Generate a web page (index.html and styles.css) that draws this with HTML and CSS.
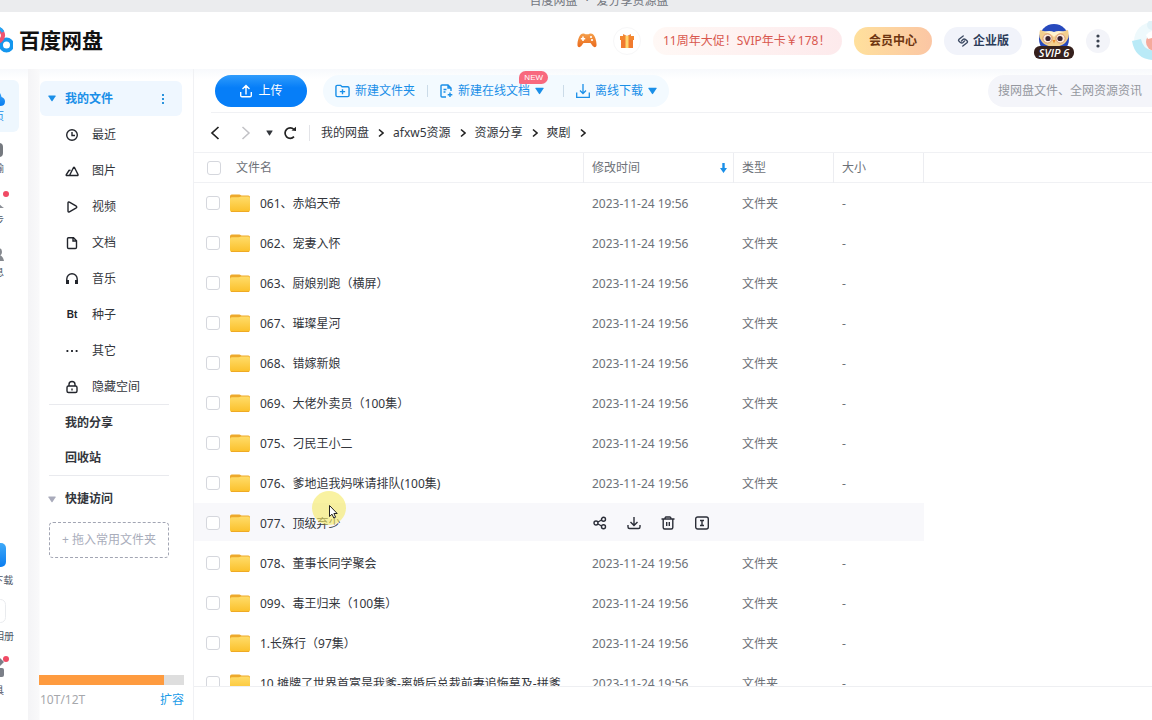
FILE: index.html
```html
<!DOCTYPE html>
<html lang="zh-CN">
<head>
<meta charset="utf-8">
<title>百度网盘</title>
<link rel="stylesheet" href="styles.css">
</head>
<body>
<svg class="defs" aria-hidden="true">
  <defs>
    <linearGradient id="gFolder" x1="0" y1="0" x2="0" y2="1"><stop offset="0" stop-color="#ffdc69"/><stop offset="1" stop-color="#fbc02a"/></linearGradient>
    <linearGradient id="gOrange" x1="0" y1="0" x2="0" y2="1"><stop offset="0" stop-color="#f5a04c"/><stop offset="1" stop-color="#ea6a1c"/></linearGradient>
    <linearGradient id="gBlue" x1="0" y1="0" x2="0" y2="1"><stop offset="0" stop-color="#3fa9f8"/><stop offset="1" stop-color="#0a7df0"/></linearGradient>
  </defs>
  <symbol id="folder" viewBox="0 0 20 19">
    <path d="M0 2.2Q0 .5 1.700.5H9.500L11.500 1.400H18.300Q20 1.400 20 3V9H0Z" fill="#eda92b"/>
    <path d="M0 5Q0 3.200 1.800 3.200H8.500Q10 3.200 11 2.600H18.200Q20 2.600 20 4.400V16Q20 18 18 18H2Q0 18 0 16Z" fill="url(#gFolder)"/>
    <path d="M1 17.500H19" stroke="#efaa24" stroke-width="1"/>
  </symbol>
  <symbol id="chev" viewBox="0 0 6 10"><path d="M1 1.500L5 5L1 8.500" fill="none" stroke="#222" stroke-width="1.600"/></symbol>
  <symbol id="caret" viewBox="0 0 8 7"><path d="M.8.5H7.200Q8 .5 7.600 1.300L4.500 6Q4 6.600 3.500 6L.4 1.300Q0 .5 .8.5Z" fill="currentColor"/></symbol>
</svg>
<div class="app">
  <div class="titlebar"><span>百度网盘</span><span>·</span><span>爱分享资源盘</span></div>

  <header class="header">
    <a class="brand" href="#">
      <svg class="brand-mark" width="34" height="30" viewBox="0 0 34 30" fill="none" stroke-width="4">
        <circle cx="7" cy="20" r="5.500" stroke="#1496ee"/>
        <circle cx="27.500" cy="20" r="5.500" stroke="#1496ee"/>
        <path d="M11 16A7.500 7.500 0 1 1 23.500 8" stroke="#26a6f5"/>
        <path d="M21 4.500Q26.500 10 22 15Q18 19 13 16.500" stroke="#ef5470"/>
        <path d="M17 2.500Q22 3 24 7" stroke="#26a6f5" stroke-width="3"/>
      </svg>
      <span>百度网盘</span>
    </a>
    <nav class="header-tools">
      <button class="plain" aria-label="游戏"><svg width="20" height="15" viewBox="0 0 20 15"><path d="M5 .8Q7-.2 8.500 1.300H11.500Q13-.2 15 .8C18 2 19.800 8.500 19.500 12.500C19 15 16.500 14.500 15 12L13.500 10H6.500L5 12C3.500 14.500 1 15 .5 12.500C.2 8.500 2 2 5 .8Z" fill="url(#gOrange)"/><path d="M6 3.500V8M3.800 5.700H8.200" stroke="#fff" stroke-width="1.600"/><circle cx="14" cy="4" r="1.100" fill="#fff"/><circle cx="15" cy="7" r="1.100" fill="#fff"/></svg></button>
      <button class="gift" aria-label="礼物"><svg width="14" height="14" viewBox="0 0 14 14"><path d="M3 0L7 2L11 0V3H3Z" fill="#ef8a3c"/><path d="M0 2H14V6H0Z" fill="#f3862f"/><path d="M1 6H13V14H1Z" fill="#f07a2e"/><path d="M5.500 2H8.500V14H5.500Z" fill="#ffd66e"/></svg></button>
      <a class="promo" href="#">11周年大促！SVIP年卡￥178！</a>
      <a class="pill vip" href="#">会员中心</a>
      <a class="pill corp" href="#"><svg width="12" height="12" viewBox="0 0 12 12" fill="none" stroke="#3c4a63" stroke-width="1.400" stroke-linecap="round" stroke-linejoin="round"><path d="M6.200 1L2 4.200Q1 5.200 2 6.200Q4.500 8.800 6 7.500L7.500 6M5.800 11L10 7.800Q11 6.800 10 5.800Q7.500 3.200 6 4.500L4.500 6"/></svg>企业版</a>
      <a class="owl" href="#" aria-label="SVIP6">
        <svg width="40" height="36" viewBox="0 0 40 36"><circle cx="20" cy="16" r="15" fill="#2749bd"/><path d="M6 7L13 9Q20 12 27 9L34 7Q36 14 32 19Q28 24 20 23Q12 24 8 19Q4 14 6 7Z" fill="#f3cf8d"/><path d="M9 9Q17 10 20 14Q23 10 31 9Q24 7 20 9Q16 7 9 9Z" fill="#fff3cf"/><circle cx="13.500" cy="15.500" r="4.600" fill="#fbe9dc" stroke="#d99a72"/><circle cx="26.500" cy="15.500" r="4.600" fill="#fbe9dc" stroke="#d99a72"/><circle cx="14" cy="15.500" r="2.600" fill="#3b2330"/><circle cx="26" cy="15.500" r="2.600" fill="#3b2330"/><path d="M18.500 17L20 20.500L21.500 17Z" fill="#e98b2d"/></svg>
        <span class="level">SVIP 6</span>
      </a>
      <button class="more" aria-label="更多"><svg width="4" height="14" viewBox="0 0 4 14" fill="#39414f"><circle cx="2" cy="2" r="1.600"/><circle cx="2" cy="7" r="1.600"/><circle cx="2" cy="12" r="1.600"/></svg></button>
      <a class="avatar" href="#" aria-label="账户"><svg width="44" height="40" viewBox="0 0 44 40"><circle cx="22" cy="20" r="19" fill="#eef9fc"/><path d="M1 20Q4 38 22 39L26 30Q12 30 10 18Z" fill="#b9eaf7"/><circle cx="24" cy="21" r="9" fill="#f5aa9b"/><path d="M15 14Q20 8 28 10L26 16L17 18Z" fill="#fff"/><circle cx="21" cy="4" r="5" fill="#e1f2f8"/></svg></a>
    </nav>
  </header>

  <div class="body">
    <nav class="rail">
      <div class="rail-list">
        <a class="rail-item on" href="#"><svg width="22" height="18" viewBox="0 0 22 18"><path d="M5 17Q0 17 0 12.500Q0 9 3.500 8Q5 1 11 1Q17 1 18.500 8Q22 9 22 12.500Q22 17 17 17Z" fill="url(#gBlue)"/></svg>首页</a>
        <a class="rail-item" href="#"><svg width="18" height="18" viewBox="0 0 18 18"><rect y="2" width="18" height="14" rx="4" fill="#75797f"/></svg>传输</a>
        <a class="rail-item" href="#"><svg width="20" height="18" viewBox="0 0 20 18"><path d="M0 15Q2 10 7 10Q8 3 12 6Q15 12 20 15Z" fill="#8b8f96"/></svg>同步<i class="dot"></i></a>
        <a class="rail-item" href="#"><svg width="20" height="18" viewBox="0 0 20 18"><circle cx="14" cy="7" r="4" fill="#85898f"/><path d="M2 16Q3 10 10 10H15Q19 11 20 16Z" fill="#85898f"/></svg>消息</a>
      </div>
      <div class="rail-list">
        <a class="rail-item" href="#"><svg width="24" height="24" viewBox="0 0 24 24"><rect width="24" height="24" rx="5" fill="url(#gBlue)"/></svg>APP下载</a>
        <a class="rail-item" href="#"><svg width="24" height="24" viewBox="0 0 24 24"><rect x=".5" y=".5" width="23" height="23" rx="5" fill="#fff" stroke="#e9ebee"/></svg>一刻相册</a>
        <a class="rail-item" href="#"><svg width="20" height="20" viewBox="0 0 20 20" fill="#7b7f88"><path d="M15 0L20 5L15 10L10 5Z"/><rect x="11" y="11" width="9" height="9" rx="2"/><rect width="9" height="9" rx="2"/><rect y="11" width="9" height="9" rx="2"/></svg>工具<i class="dot"></i></a>
      </div>
    </nav>

    <aside class="side">
      <a class="side-head" href="#"><svg class="caret" width="8" height="7"><use href="#caret"/></svg><b>我的文件</b><svg width="4" height="12" viewBox="0 0 4 12" fill="#2a93dd"><rect x="1" y="1" width="2" height="2"/><rect x="1" y="5" width="2" height="2"/><rect x="1" y="9" width="2" height="2"/></svg></a>
      <div class="group">
        <a class="item" href="#"><svg viewBox="0 0 14 14"><circle cx="7" cy="7" r="5.300"/><path d="M7 4V7.500H10"/></svg>最近</a>
        <a class="item" href="#"><svg viewBox="0 0 14 14"><path d="M4.500 11.500L8.500 3.500Q9 2.700 9.500 3.500L13 10.500Q13.300 11.500 12.300 11.500H2Q.8 11.500 1.300 10.500L4 6.500L5.500 6.200"/></svg>图片</a>
        <a class="item" href="#"><svg viewBox="0 0 14 14"><path d="M3 3Q3 1.500 4.400 2.200L11.300 6.200Q12.300 7 11.300 7.800L4.400 11.800Q3 12.500 3 11Z"/></svg>视频</a>
        <a class="item" href="#"><svg viewBox="0 0 14 14"><path d="M3.500 1.700H8.500L11.500 4.700V11.300Q11.500 12.500 10.300 12.500H3.700Q2.500 12.500 2.500 11.300V2.700Q2.500 1.700 3.500 1.700ZM8 1.700V5H11.500"/></svg>文档</a>
        <a class="item" href="#"><svg viewBox="0 0 14 14"><path d="M1.800 9V7A5.200 5.200 0 0 1 12.200 7V9"/><path d="M2.500 8V12M11.500 8V12" stroke-width="3"/></svg>音乐</a>
        <a class="item" href="#"><span class="bt">Bt</span>种子</a>
        <a class="item" href="#"><svg viewBox="0 0 14 14"><path d="M1.500 7H3.300M6.100 7H7.900M10.700 7H12.500" stroke-width="1.800"/></svg>其它</a>
        <a class="item" href="#"><svg viewBox="0 0 14 14"><rect x="2" y="6" width="10" height="6.500" rx="1.500"/><path d="M4 6V4.500A3 3 0 0 1 10 4.500V6M7 8.500V10.500"/></svg>隐藏空间</a>
      </div>
      <div class="group">
        <a class="item strong" href="#">我的分享</a>
        <a class="item strong" href="#">回收站</a>
      </div>
      <a class="side-head quick" href="#"><svg class="caret" width="8" height="7"><use href="#caret"/></svg><b>快捷访问</b></a>
      <button class="drop">+ 拖入常用文件夹</button>
      <div class="quota">
        <div class="bar"><div class="fill" style="width:86%"></div></div>
        <div class="quota-line"><span>10T/12T</span><a href="#">扩容</a></div>
      </div>
    </aside>

    <main class="main">
      <div class="toolbar">
        <button class="upload"><svg width="14" height="14" viewBox="0 0 14 14" fill="none" stroke="#fff" stroke-width="1.400"><path d="M7 10.500V1.500M3.500 5L7 1.500L10.500 5M1.700 8V11.500Q1.700 12.800 3 12.800H11Q12.300 12.800 12.300 11.500V8"/></svg>上传</button>
        <div class="actions">
          <button class="act"><svg width="15" height="14" viewBox="0 0 16 14" fill="none" stroke="#1a8fe8" stroke-width="1.500"><path d="M1 2.300Q1 1 2.300 1H6L7.500 2.500H13.500Q15 2.500 15 4V11.500Q15 13 13.500 13H2.500Q1 13 1 11.500ZM8 5V10.500M5.200 7.700H10.800"/></svg>新建文件夹</button>
          <button class="act"><svg width="13" height="14" viewBox="0 0 13 14" fill="none" stroke="#1a8fe8" stroke-width="1.400"><path d="M11 7V4L8 1H2Q1 1 1 2V12Q1 13 2 13H6M8 1V4H11M3.500 5.500H6.500M3.500 8H5.500M10 8.500V13M7.700 10.700H12.300"/></svg>新建在线文档<svg class="caret" width="9" height="8"><use href="#caret"/></svg><span class="new">NEW</span></button>
          <button class="act"><svg width="14" height="14" viewBox="0 0 14 14" fill="none" stroke="#1a8fe8" stroke-width="1.300"><path d="M7 0V9.500M4 6.500L7 9.500L10 6.500M.7 8.500V13.300H13.300V8.500"/></svg>离线下载<svg class="caret" width="9" height="8"><use href="#caret"/></svg></button>
        </div>
        <input class="search" type="search" aria-label="搜索" placeholder="搜网盘文件、全网资源资讯">
      </div>

      <div class="nav">
        <button class="plain" aria-label="后退"><svg width="10" height="14" viewBox="0 0 10 14" fill="none" stroke="#222" stroke-width="1.700"><path d="M8.500 1L2 7L8.500 13"/></svg></button>
        <button class="plain" aria-label="前进"><svg width="10" height="14" viewBox="0 0 10 14" fill="none" stroke="#c2c2c6" stroke-width="1.500"><path d="M1.500 1L8 7L1.500 13"/></svg></button>
        <button class="plain small" aria-label="历史"><svg width="7" height="6"><use href="#caret"/></svg></button>
        <button class="plain" aria-label="刷新"><svg width="14" height="14" viewBox="0 0 14 14" fill="none" stroke="#222" stroke-width="1.700"><path d="M11 10.700A5.200 5.200 0 1 1 11 3.500"/><path d="M8.500 4.500L13 5V.8Z" fill="#222" stroke="none"/></svg></button>
        <div class="crumbs">
          <a href="#">我的网盘</a><svg width="6" height="10"><use href="#chev"/></svg>
          <a href="#">afxw5资源</a><svg width="6" height="10"><use href="#chev"/></svg>
          <a href="#">资源分享</a><svg width="6" height="10"><use href="#chev"/></svg>
          <a href="#">爽剧</a><svg width="6" height="10"><use href="#chev"/></svg>
        </div>
      </div>

      <div class="list">
        <table>
          <colgroup><col><col class="c-time"><col class="c-type"><col class="c-size"></colgroup>
          <thead><tr>
            <th><div class="cell head"><input type="checkbox" aria-label="全选">文件名</div></th>
            <th><div class="cell between">修改时间<svg width="7" height="10" viewBox="0 0 7 10" fill="#1a8fe8"><path d="M2.300 0H4.700V5H7L3.500 10L0 5H2.300Z"/></svg></div></th>
            <th>类型</th><th>大小</th>
          </tr></thead>
          <tbody id="rows"></tbody>
        </table>
      </div>
      <div class="foot"></div>
    </main>
  </div>

  <svg class="pointer" width="34" height="34" viewBox="0 0 34 34"><circle cx="17" cy="17" r="17" fill="#f5ea62" fill-opacity=".6"/><path d="M17.500 14.500V25.500L20 23.200L21.800 27L23.600 26.200L21.900 22.500H25.200Z" fill="#fff" stroke="#222"/></svg>
</div>
<script src="app.js"></script>
</body>
</html>
```
FILE: styles.css
```css
* { box-sizing: border-box; }
body {
  margin: 0;
  font: 12px/16px "Noto Sans", "Noto Sans CJK SC", sans-serif;
  color: #33363c;
  background: #fff;
}
a { color: inherit; text-decoration: none; }
button { font: inherit; color: inherit; background: none; border: 0; padding: 0; cursor: pointer; }
svg { flex: none; display: block; }
.defs { position: absolute; width: 0; height: 0; }

.app { position: relative; display: flex; flex-direction: column; height: 100vh; overflow: hidden; }
.titlebar {
  flex: none; display: flex; justify-content: center; align-items: flex-end; gap: 8px;
  height: 12px; padding: 0 0 3px 46px; overflow: hidden;
  background: #ebecee; color: #73777f;
}

.header { flex: none; display: flex; justify-content: space-between; align-items: center; height: 57px; overflow: hidden; }
.brand { display: flex; align-items: center; gap: 6px; margin-left: -21px; padding-bottom: 2px; font-size: 21px; line-height: 28px; font-weight: 700; color: #111; }
.header-tools { display: flex; align-items: center; gap: 12px; }
.plain { display: flex; align-items: center; justify-content: center; min-width: 14px; height: 20px; }
.gift { display: flex; align-items: center; justify-content: center; width: 28px; height: 28px; margin-left: 4px; border: 1px solid #f7f7f8; border-radius: 14px; }
.promo { min-width: 189px; padding: 6px 4px 6px 10px; border-radius: 14px; color: #d9584f; background: linear-gradient(90deg, #fff8f5, #fdeaec); white-space: nowrap; }
.pill { display: flex; align-items: center; justify-content: center; gap: 4px; width: 78px; height: 28px; border-radius: 14px; font-weight: 700; }
.vip { color: #6e3510; background: linear-gradient(90deg, #ffe09c, #fbc6a4); }
.corp { color: #2d3d5a; background: #f1f3fa; }
.owl { position: relative; width: 40px; height: 36px; }
.level { position: absolute; left: 0; right: 0; bottom: 0; border-radius: 6px; background: #35201d; color: #fff; font: italic 600 11px/13px "Open Sans", sans-serif; text-align: center; }
.more { display: flex; align-items: center; justify-content: center; width: 24px; height: 24px; border-radius: 12px; background: #f3f4f9; }
.avatar { margin: 0 -23px 0 9px; }

.body { flex: 1; display: flex; min-height: 0; background: linear-gradient(#f7f9fc, #fff 10px); }
.rail { flex: none; display: flex; flex-direction: column; justify-content: space-between; width: 28px; padding: 11px 0 15px; overflow: hidden; }
.rail-list { display: flex; flex-direction: column; }
.rail-item { position: relative; display: flex; flex-direction: column; align-items: center; justify-content: center; gap: 2px; width: 50px; height: 52px; margin-left: -31px; border-radius: 6px; font-size: 10px; line-height: 14px; color: #50596a; white-space: nowrap; }
.rail-item.on { background: #eef7fe; color: #1a8fe8; }
.rail-list:last-child .rail-item { height: 56px; gap: 6px; }
.dot { position: absolute; right: 10px; top: 7px; width: 6px; height: 6px; border-radius: 3px; background: #f04a64; }

.side { flex: none; display: flex; flex-direction: column; width: 166px; padding: 12px 11px 12px 12px; border-right: 1px solid #f0f1f4; background: linear-gradient(90deg, #f4f4f6, #f9f9fa 11px, transparent 12px); }
.side-head { display: flex; align-items: center; gap: 9px; height: 35px; padding: 0 17px 0 8px; border-radius: 6px; background: #eff7ff; color: #1a8fe8; }
.side-head b { flex: 1; }
.side-head.quick { height: 46px; background: none; color: #33363c; }
.quick .caret { color: #a9abbb; }
.group { display: flex; flex-direction: column; margin: 0 13px 0 9px; border-bottom: 1px solid #e9eaee; }
.item { display: flex; align-items: center; gap: 13px; height: 36px; padding: 1px 0 0 16px; }
.item svg, .bt { width: 14px; height: 14px; }
.item svg { fill: none; stroke: #22252c; stroke-width: 1.4px; }
.bt { font: 700 10px/14px "Liberation Sans", sans-serif; text-align: center; color: #22252c; }
.item.strong { height: 35px; font-weight: 700; }
.drop { height: 36px; margin: 0 13px 0 9px; border: 1px dashed #a2a5b3; border-radius: 4px; color: #a9adbb; white-space: nowrap; }
.quota { margin: auto -2px 0 -1px; }
.bar { height: 10px; background: #dedede; }
.fill { height: 10px; background: #fe9b3f; }
.quota-line { display: flex; justify-content: space-between; padding: 7px 0 0 1px; color: #a6a8ac; }
.quota-line a { color: #1a9be8; }

.main { flex: 1; display: flex; flex-direction: column; min-width: 0; overflow: hidden; }
.toolbar { flex: none; display: flex; align-items: center; height: 44px; margin-left: 17px; padding-left: 4px; border-bottom: 1px solid #f0f1f4; }
.upload { display: flex; align-items: center; justify-content: center; gap: 5px; width: 92px; height: 32px; border-radius: 16px; color: #fff; background: linear-gradient(#2f9cfc, #067ef8 40%); }
.actions { display: flex; align-items: center; height: 32px; margin-left: 16px; padding: 0 12px; border-radius: 16px; background: #f3faff; color: #1a8fe8; }
.act { position: relative; display: flex; align-items: center; gap: 5px; white-space: nowrap; }
.act + .act { margin-left: 12px; padding-left: 13px; background: linear-gradient(#cbdbe8, #cbdbe8) left center / 1px 12px no-repeat; }
.act:last-child { margin-left: 19px; }
.new { position: absolute; right: -4px; top: -12px; padding: 0 5px; border-radius: 7px 7px 7px 2px; background: #f8697e; color: #fff; font: 8px/13px "Liberation Sans", sans-serif; }
.search { width: 190px; height: 32px; margin: 0 -26px 0 auto; padding: 0 10px; border: 0; border-radius: 16px; background: #f4f5fa; font: inherit; }
.search::placeholder { color: #95989f; }

.nav { flex: none; display: flex; align-items: center; gap: 12px; height: 39px; padding-left: 14px; }
.nav .plain + .plain { margin-left: 5px; }
.nav .plain + .small { margin: 0 -10px 0 -3px; }
.crumbs { display: flex; align-items: center; gap: 9px; padding-left: 12px; background: linear-gradient(#e3e4e8, #e3e4e8) left center / 1px 18px no-repeat; }

.list { flex: 1; min-height: 0; overflow: hidden; border-top: 1px solid #f0f1f4; background: linear-gradient(#f0f1f4, #f0f1f4) 0 29px / 100% 1px no-repeat; }
table { width: 730px; border-collapse: separate; border-spacing: 0; table-layout: fixed; }
.c-time { width: 150px; }
.c-type { width: 100px; }
.c-size { width: 90px; }
th, td { padding: 0 0 0 8px; text-align: left; font-weight: 400; white-space: nowrap; color: #6d7178; }
th { height: 30px; border-right: 1px solid #ecedf1; }
td { height: 40px; }
td:first-child, th:first-child { padding-left: 12px; }
.cell { display: flex; align-items: center; gap: 10px; color: #33363c; }
td > span, .cell span { display: block; padding-top: 2px; }
.head { gap: 15px; padding-left: 1px; color: #6d7178; }
.between { justify-content: space-between; padding-right: 6px; color: #6d7178; }
input[type="checkbox"] { appearance: none; flex: none; width: 14px; height: 14px; margin: 0; border: 1px solid #d5d7dd; border-radius: 3px; background: #fff; }
.hover td { background: linear-gradient(#f8f8fb, #f8f8fb) 0 0 / 100% 38px no-repeat; }
.ops { display: flex; gap: 20px; padding-left: 1px; }
.ops svg { fill: none; stroke: #2b2e38; stroke-width: 1.4px; }
.foot { flex: none; height: 34px; border-top: 1px solid #eeeff2; }
.pointer { position: absolute; left: 312px; top: 491px; pointer-events: none; }
```
FILE: app.js
```js
const names = [
  "061、赤焰天帝", "062、宠妻入怀", "063、厨娘别跑（横屏）", "067、璀璨星河",
  "068、错嫁新娘", "069、大佬外卖员（100集）", "075、刁民王小二",
  "076、爹地追我妈咪请排队(100集)", "077、顶级弃少", "078、董事长同学聚会",
  "099、毒王归来（100集）", "1.长殊行（97集）",
  "10.摊牌了世界首富是我爹-离婚后总裁前妻追悔莫及-拼爹"
];
const hovered = 8;
const ops = [
  ["分享", '<circle cx="3" cy="7" r="2"/><circle cx="10.500" cy="3.300" r="2"/><circle cx="10.500" cy="10.700" r="2"/><path d="M5 6L8.500 4M5 8L8.500 10"/>'],
  ["下载", '<path d="M7 1V9.500M3.500 6L7 9.500L10.500 6M1 9V11Q1 12.500 2.500 12.500H11.500Q13 12.500 13 11V9"/>'],
  ["删除", '<path d="M.5 3H13.500M4 3Q4 1 5 1H9Q10 1 10 3M2.200 3V11.500Q2.200 13 3.700 13H10.300Q11.800 13 11.800 11.500V3M5.700 6V10M8.300 6V10"/>'],
  ["重命名", '<rect x=".7" y="1" width="12.600" height="12" rx="2"/><path d="M5 4.500H9M5 9.500H9M7 4.500V9.500"/>']
];
const opsCell = '<td colspan="3"><div class="ops">' + ops.map(([label, d]) =>
  `<button aria-label="${label}"><svg width="14" height="14" viewBox="0 0 14 14">${d}</svg></button>`).join("") + "</div></td>";

document.getElementById("rows").innerHTML = names.map((name, i) => `
  <tr class="${i === hovered ? "hover" : ""}">
    <td><div class="cell"><input type="checkbox" aria-label="${name}"><svg width="20" height="19"><use href="#folder"/></svg><span>${name}</span></div></td>
    ${i === hovered ? opsCell : "<td><span>2023-11-24 19:56</span></td><td><span>文件夹</span></td><td><span>-</span></td>"}
  </tr>`).join("");
```
